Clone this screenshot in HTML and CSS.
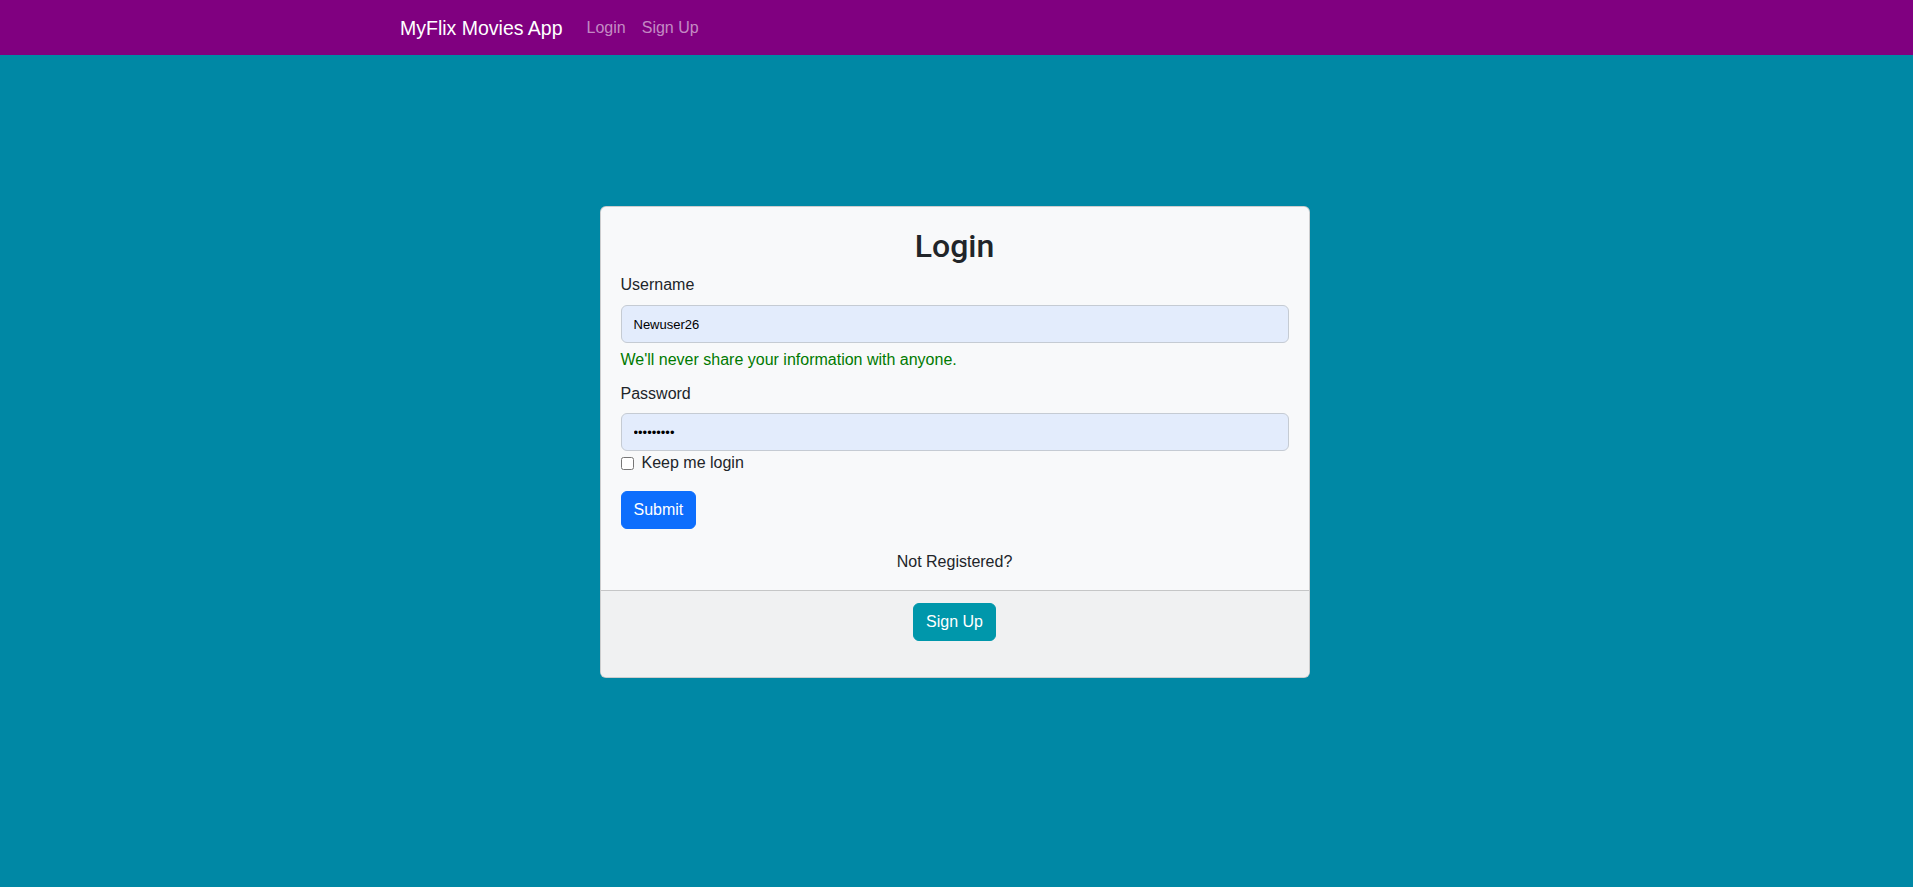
FILE: index.html
```html
<!DOCTYPE html>
<html lang="en">
<head>
<meta charset="utf-8">
<title>MyFlix Movies App</title>
<link rel="stylesheet" href="styles.css">
</head>
<body>
<nav class="navbar">
  <div class="nav-inner">
    <a class="brand" href="#">MyFlix Movies App</a>
    <a class="nav-link" href="#">Login</a>
    <a class="nav-link" href="#">Sign Up</a>
  </div>
</nav>
<main class="main">
  <div class="card">
    <form class="card-body">
      <h2 class="title">Login</h2>
      <label class="label" for="username">Username</label>
      <input class="control" id="username" type="text" value="Newuser26">
      <div class="help">We'll never share your information with anyone.</div>
      <label class="label label-pw" for="password">Password</label>
      <input class="control" id="password" type="password" value="123456789">
      <label class="check"><input type="checkbox" class="check-input">Keep me login</label>
      <button type="button" class="btn btn-primary">Submit</button>
      <p class="not-reg">Not Registered?</p>
    </form>
    <div class="card-footer">
      <button type="button" class="btn btn-teal">Sign Up</button>
    </div>
  </div>
</main>
</body>
</html>
```

FILE: styles.css
```css
* { box-sizing: border-box; }
html, body { margin: 0; }
body {
  font-family: "Liberation Sans", Arial, sans-serif;
  font-size: 16px;
  line-height: 1.5;
  color: #212529;
  background: #0088a5;
  min-height: 887px;
}
.navbar {
  background: #800080;
  height: 55px;
  display: flex;
  align-items: center;
}
.nav-inner {
  width: 1113px;
  margin: 0 auto;
  display: flex;
  align-items: center;
}
.brand {
  color: #fff;
  font-size: 19.5px;
  line-height: 30px;
  text-decoration: none;
  margin-right: 16px;
}
.nav-link {
  color: rgba(255, 255, 255, 0.55);
  text-decoration: none;
  padding: 8px;
  line-height: 24px;
}
.main {
  padding-top: 151px;
}
.card {
  width: 710px;
  margin-left: calc(50% - 357px);
  background: #f8f9fa;
  border: 1px solid rgba(0, 0, 0, 0.175);
  border-radius: 6px;
  overflow: hidden;
}
.card-body {
  padding: 20px 20px 16px;
  display: flex;
  flex-direction: column;
  margin: 0;
}
.title {
  margin: 0 0 8px;
  font-family: Roboto, "Liberation Sans", Arial, sans-serif;
  font-size: 32px;
  line-height: 38px;
  font-weight: 500;
  text-align: center;
}
.label {
  display: block;
  line-height: 24px;
  margin-bottom: 8px;
}
.label-pw { margin-bottom: 7px; }
.control {
  display: block;
  width: 100%;
  height: 38px;
  padding: 6px 12px;
  font-family: "Liberation Sans", Arial, sans-serif;
  font-size: 13px;
  color: #000;
  background: #e3ecfc;
  border: 1px solid #c5cbd3;
  border-radius: 6px;
  outline: none;
}
.help {
  color: #007a00;
  margin-top: 5px;
  margin-bottom: 10px;
  line-height: 24px;
}
.check {
  display: flex;
  align-items: center;
  line-height: 24px;
}
.check-input {
  width: 13px;
  height: 13px;
  margin: 0 8px 0 0;
}
.btn {
  font-family: "Liberation Sans", Arial, sans-serif;
  font-size: 16px;
  line-height: 24px;
  padding: 6px 12px;
  border-radius: 6px;
  border: 1px solid transparent;
  color: #fff;
  cursor: pointer;
}
.btn-primary {
  align-self: flex-start;
  margin-top: 16px;
  background: #0d6efd;
  border-color: #0d6efd;
}
.not-reg {
  margin: 21px 0 0;
  text-align: center;
  line-height: 24px;
}
.card-footer {
  background: #f0f1f2;
  border-top: 1px solid rgba(0, 0, 0, 0.175);
  padding: 12px 20px 36px;
  display: flex;
  justify-content: center;
}
.btn-teal {
  background: #0097ab;
  border-color: #0097ab;
}
```
